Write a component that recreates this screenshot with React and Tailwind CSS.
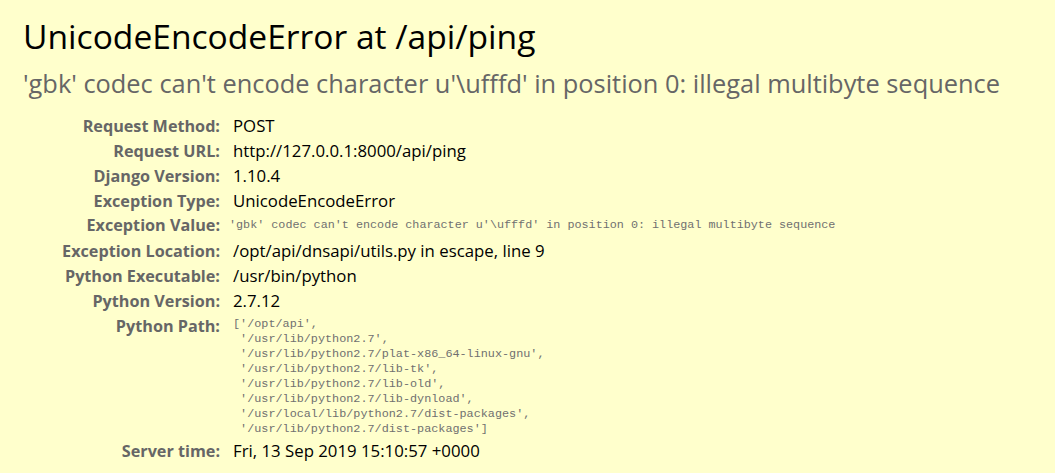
const rows = [
    { label: "Request Method:", value: "POST" },
    { label: "Request URL:", value: "http://127.0.0.1:8000/api/ping" },
    { label: "Django Version:", value: "1.10.4" },
    { label: "Exception Type:", value: "UnicodeEncodeError" },
    {
        label: "Exception Value:",
        value: "'gbk' codec can't encode character u'\\ufffd' in position 0: illegal multibyte sequence",
        mono: true,
    },
    { label: "Exception Location:", value: "/opt/api/dnsapi/utils.py in escape, line 9" },
    { label: "Python Executable:", value: "/usr/bin/python" },
    { label: "Python Version:", value: "2.7.12" },
];

const pythonPath = [
    "['/opt/api',",
    " '/usr/lib/python2.7',",
    " '/usr/lib/python2.7/plat-x86_64-linux-gnu',",
    " '/usr/lib/python2.7/lib-tk',",
    " '/usr/lib/python2.7/lib-old',",
    " '/usr/lib/python2.7/lib-dynload',",
    " '/usr/local/lib/python2.7/dist-packages',",
    " '/usr/lib/python2.7/dist-packages']",
];

const Label = ({ children }) => (
    <div className="w-[210px] shrink-0 text-right font-bold text-[16.2px] text-[#666] pr-[13px]">{children}</div>
);

const App = () => {
    return (
        <section className="min-h-screen w-full bg-[#ffffcc] px-[23px] pt-[13px] text-[16.8px] text-black font-['Open_Sans',sans-serif]">
            <h1 className="text-[33.6px] leading-[46px] font-normal">UnicodeEncodeError at /api/ping</h1>
            <h2 className="mt-[7px] text-[25.4px] leading-[34px] font-normal text-[#666]">
                'gbk' codec can't encode character u'\ufffd' in position 0: illegal multibyte sequence
            </h2>

            <div className="mt-[13px] flex flex-col">
                {rows.map((row) => (
                    <div key={row.label} className="flex items-baseline h-[25px]">
                        <Label>{row.label}</Label>
                        {row.mono ? (
                            <span className="-ml-[4px] -translate-y-[3px] font-['Liberation_Mono',monospace] text-[11.75px] text-[#707070]">{row.value}</span>
                        ) : (
                            <span>{row.value}</span>
                        )}
                    </div>
                ))}

                {/* Python path is a pre block */}
                <div className="flex items-start mt-[4px]">
                    <div className="-mt-[3px]">
                        <Label>Python Path:</Label>
                    </div>
                    <pre className="font-['Liberation_Mono',monospace] text-[11.8px] leading-[15px] text-[#707070]">
                        {pythonPath.join("\n")}
                    </pre>
                </div>

                <div className="flex items-baseline h-[25px] mt-[1px]">
                    <Label>Server time:</Label>
                    <span>Fri, 13 Sep 2019 15:10:57 +0000</span>
                </div>
            </div>
        </section>
    );
};

export default App;
